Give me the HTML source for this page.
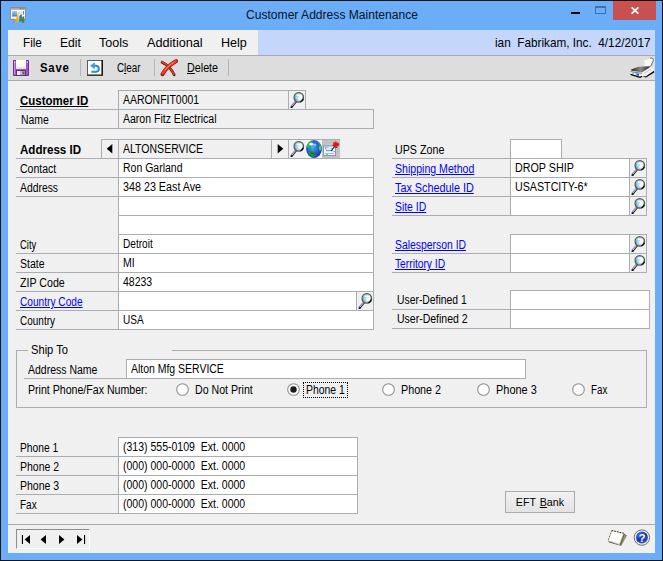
<!DOCTYPE html>
<html lang="en"><head><meta charset="utf-8"><title>Customer Address Maintenance</title>
<style>
html,body{margin:0;padding:0}
body{width:663px;height:561px;overflow:hidden;background:#6BADF6;position:relative;font-family:"Liberation Sans",sans-serif}
#w{position:absolute;left:0;top:0;width:663px;height:561px;box-sizing:border-box;border:1px solid #141414;overflow:hidden}
#w>*{position:absolute}
#c{position:absolute;left:-1px;top:-1px;width:663px;height:561px}
#c>*{position:absolute}
span{white-space:nowrap;transform-origin:0 50%;color:#000}
.t,.lk,.b,.tb{font-size:12px;line-height:16px;transform:scaleX(.875)}
.b,.tb{font-weight:bold;transform:scaleX(.97)}
.lk{color:#00f;text-decoration:underline}
.title{font-size:12.500px;line-height:18px;color:#08122c;transform:scaleX(.967)}
.menu{font-size:13px;line-height:16px;transform:scaleX(.965)}
.btn{box-sizing:border-box;border:1px solid #ACACAC;background:linear-gradient(#F2F2F2,#E3E3E3);text-align:center}
.btn span{position:static;display:inline-block;font-size:11.500px;line-height:20px;transform-origin:50% 50%;transform:scaleX(.93);word-spacing:1px}
</style></head>
<body>
<div id="w"><div id="c">
<!-- title bar -->
<span class="title" style="left:246px;top:6px">Customer Address Maintenance</span>
<div style="left:571px;top:12px;width:9px;height:2px;background:#000;"></div>
<div style="left:595px;top:6px;width:11px;height:8px;background:transparent;border:1px solid #3F6FAE;border-top-width:2px;box-sizing:border-box"></div>
<div style="left:613px;top:1px;width:43px;height:19px;background:#C75050;"></div>
<svg style="left:630px;top:6px" width="10" height="9" viewBox="0 0 10 9"><path d="M1.600 1.400l6.800 6.200M8.400 1.400l-6.800 6.200" stroke="#fff" stroke-width="1.700"/></svg>
<svg style="left:10px;top:7px" width="17" height="17" viewBox="0 0 17 17"><defs><linearGradient id="ab" x1="0" y1="0" x2="0" y2="1"><stop offset="0" stop-color="#a6cdf0"/><stop offset="1" stop-color="#3b7cc9"/></linearGradient><linearGradient id="ao" x1="0" y1="1" x2=".8" y2="0"><stop offset="0" stop-color="#e23a1c"/><stop offset=".3" stop-color="#f59a14"/><stop offset=".8" stop-color="#fcc816"/></linearGradient></defs><rect x=".5" y=".5" width="15" height="12" fill="#fdfdfd" stroke="#8e8e8e"/><rect x="1" y="1" width="14" height="1.800" fill="#a9a9a9"/><rect x="9.800" y="1.300" width="1" height="1" fill="#666"/><rect x="11.600" y="1.300" width="1" height="1" fill="#666"/><rect x="13.400" y="1.300" width="1" height="1" fill="#666"/><rect x="2.100" y="4" width="4.900" height="5.600" fill="url(#ab)"/><rect x="13" y="4" width="1.100" height="3.600" fill="#4a8ad8"/><rect x="9.200" y="4.800" width="3" height=".8" fill="#c4c4c4"/><rect x="9.200" y="6.300" width="2" height=".8" fill="#c4c4c4"/><rect x="2.500" y="10.800" width="2" height="1" fill="#c4c4c4"/><path d="M2.800 15.400Q6.600 12.600 8 5.200L8.800 4.800V14.800Q5.800 14.300 2.800 15.400z" fill="url(#ao)"/><path d="M9.300 14.600V9.300Q10.400 7.200 11.900 7V14.600z" fill="#2f74b4"/><path d="M12.100 15.400V10.200Q13 9.100 14.300 9.200V16z" fill="#3d8c1f"/></svg>
<!-- menu bar -->
<div style="left:8px;top:30px;width:250px;height:25px;background:#F0F0F0;"></div>
<div style="left:258px;top:30px;width:397px;height:25px;background:#C4D7FB;"></div>
<span class="menu" style="left:22.5px;top:35px;transform:scaleX(0.9)">File</span>
<span class="menu" style="left:60px;top:35px;transform:scaleX(0.93)">Edit</span>
<span class="menu" style="left:99px;top:35px;transform:scaleX(0.965)">Tools</span>
<span class="menu" style="left:147px;top:35px;transform:scaleX(0.975)">Additional</span>
<span class="menu" style="left:221px;top:35px;transform:scaleX(0.965)">Help</span>
<span class="menu" style="left:495px;top:35px;transform:scaleX(.905)">ian&nbsp; Fabrikam, Inc.&nbsp; 4/12/2017</span>
<!-- toolbar -->
<div style="left:8px;top:55px;width:647px;height:26px;background:#DCDDDC;"></div>
<div style="left:8px;top:55px;width:647px;height:1px;background:#ABABAB;"></div>
<div style="left:8px;top:80px;width:647px;height:1px;background:#ABABAB;"></div>
<svg style="left:13px;top:60px" width="16" height="16" viewBox="0 0 16 16"><path d="M.5.500h15v15H.5z" fill="#a557c8" stroke="#6e3196"/><path d="M1.500 1.500v13" stroke="#c78fe0"/><rect x="3" y="0" width="10" height="8.600" fill="#fff"/><rect x="3" y="6.600" width="10" height="2" fill="#ececec"/><rect x="3.500" y="10.500" width="9" height="5" fill="#b9b9bd" stroke="#5f2a86"/><rect x="4" y="11" width="3" height="4" fill="#f3f3f3"/><rect x="9.500" y="11.500" width="2" height="3" fill="#5a5a5e"/><rect x="1" y="1.500" width="1.200" height="1.200" fill="#f0e2f8"/><rect x="13.800" y="1.500" width="1.200" height="1.200" fill="#f0e2f8"/></svg>
<span class="tb" style="left:40.0px;top:60px;transform:scaleX(0.946);letter-spacing:.8px">Save</span>
<div style="left:80px;top:59px;width:1px;height:17px;background:#B5B5B5;"></div>
<svg style="left:87px;top:60px" width="16" height="16" viewBox="0 0 16 16"><rect x=".5" y=".5" width="14.500" height="14.500" fill="#fff" stroke="#5c5c5c"/><path d="M15.300 0v16" stroke="#111" stroke-width="1.300"/><path d="M0 15.300h16" stroke="#3a3a22" stroke-width="1.300"/><path d="M5.500 5.800h3.300a3 3 0 010 6H4.500" stroke="#2d86d8" stroke-width="2" fill="none"/><path d="M7.800 2.200L3 5.800l4.800 3.400z" fill="#3fa0dc"/><path d="M4.500 12h4" stroke="#1fb0b0" stroke-width="1"/></svg>
<span class="t" style="left:117.0px;top:60px;transform:scaleX(0.8185);">C<u>l</u>ear</span>
<div style="left:154px;top:59px;width:1px;height:17px;background:#B5B5B5;"></div>
<svg style="left:160px;top:59px" width="18" height="18" viewBox="0 0 18 18"><path d="M2 3.200C7 5.500 11.500 10 14.200 15.800" stroke="#3a0a06" stroke-width="2.600" stroke-linecap="round" fill="none"/><path d="M2 2.800C7 5 11.200 9.500 13.800 15" stroke="#d83a22" stroke-width="2" stroke-linecap="round" fill="none"/><path d="M16 2.200C10.500 5 5.500 9.500 2.600 15.200" stroke="#a01a10" stroke-width="4" stroke-linecap="round" fill="none"/><path d="M15.600 2.400C10.500 5 5.800 9.200 3 14.200" stroke="#e8432a" stroke-width="2.600" stroke-linecap="round" fill="none"/><path d="M14 3.200C10.500 5.200 7.500 8 5.200 11" stroke="#f58a6c" stroke-width="1" fill="none"/></svg>
<span class="t" style="left:187.0px;top:60px;transform:scaleX(0.8961);"><u>D</u>elete</span>
<div style="left:228px;top:59px;width:1px;height:17px;background:#B5B5B5;"></div>
<svg style="left:629px;top:57px" width="26" height="22" viewBox="0 0 26 22"><defs><linearGradient id="pg" x1="0" y1="0" x2="1" y2="0"><stop offset="0" stop-color="#222"/><stop offset=".5" stop-color="#8a8a8a"/><stop offset="1" stop-color="#2a2a2a"/></linearGradient></defs><path d="M14.200 3.800L21 1.300Q24.600.4 24.300 3.400L21.600 9.600 15 8.800 16 5.600z" fill="#fbfaf1"/><path d="M21 1.300Q24.800.3 24.300 3.400L21.600 9.500" stroke="#5a5a5a" stroke-width=".9" fill="none"/><path d="M14.200 3.800L21 1.300" stroke="#b9d8b0" stroke-width=".6" stroke-dasharray="1 1.500"/><path d="M2 12.600L9.500 9.800 21 9.300 19.500 12 13 15.700 3 14.200z" fill="url(#pg)"/><path d="M13 15.600L19.500 11.200 24.600 9.500 25 14 17 19.400 13 18.900z" fill="#f0f0ec"/><path d="M15 16.500l7-4.600" stroke="#c9b8d8" stroke-width=".7"/><path d="M13.400 19.400L17 20.600 25.200 15.500 25 13.800 17 19.200z" fill="#000"/><path d="M1 14.600L3 13.800 13 15.600V19L11 20 1.500 17.200z" fill="#f5f5f5"/><path d="M1.500 14.600L12.800 16.400" stroke="#555" stroke-width=".8"/><path d="M1.500 17.400L11 20.300 13 19.200" stroke="#000" stroke-width="1.300" fill="none"/><path d="M7.400 16.300l2.600.4v2.200l-2.600-.6z" fill="#1c5fd2"/><path d="M3.300 15.600l1.800.3v1.300l-1.800-.4z" fill="#5ab9ea"/><path d="M5.500 16l1.400.2v1.400l-1.400-.3z" fill="#bfe3c4"/></svg>
<!-- form body -->
<div style="left:8px;top:81px;width:647px;height:443px;background:#F0F0F0;"></div>
<div style="left:8px;top:524px;width:647px;height:1px;background:#ABABAB;"></div>
<div style="left:8px;top:525px;width:647px;height:28px;background:#F0F0F0;"></div>
<div style="left:118px;top:90px;width:188px;height:1px;background:#ABADB3;"></div>
<div style="left:118px;top:90px;width:1px;height:39px;background:#ABADB3;"></div>
<div style="left:288px;top:90px;width:1px;height:20px;background:#ABADB3;"></div>
<div style="left:305px;top:90px;width:1px;height:20px;background:#ABADB3;"></div>
<div style="left:16px;top:109px;width:358px;height:1px;background:#ABADB3;"></div>
<div style="left:16px;top:128px;width:358px;height:1px;background:#ABADB3;"></div>
<div style="left:373px;top:109px;width:1px;height:20px;background:#ABADB3;"></div>
<span class="b" style="left:20.0px;top:93px;transform:scaleX(0.9575);text-decoration:underline">Customer ID</span>
<span class="t" style="left:123.0px;top:92px;transform:scaleX(0.871);">AARONFIT0001</span>
<svg style="left:289px;top:91px" width="16" height="18" viewBox="0 0 16 18"><line x1="7.400" y1="10.400" x2="2.600" y2="16.200" stroke="#1a1a1a" stroke-width="1.500" stroke-linecap="round"/><line x1="6.600" y1="9.800" x2="2" y2="15.300" stroke="#6f78c4" stroke-width="1.100"/><line x1="6.900" y1="10.400" x2="2.800" y2="15.300" stroke="#f2f2f2" stroke-width=".7"/><rect x="1.600" y="15.400" width="1.800" height="1.600" fill="#111"/><circle cx="9.800" cy="6.400" r="4.700" fill="#a9d3f7" stroke="#5a563e" stroke-width="1.300"/><path d="M11.500 10.800A4.700 4.700 0 0014.300 7.800" stroke="#111" stroke-width="1.300" fill="none"/><path d="M8 3.600h4.200l1.200 1.800-1 3.400H9.400l-.7-2.200h1.400l.2-1.400H8.200z" fill="#fdfcf1"/><path d="M6.300 4.600q-.8 2.600 1.200 4.400" stroke="#4fbfc8" stroke-width="1" fill="none"/></svg>
<span class="t" style="left:20.5px;top:112px;transform:scaleX(0.8695);">Name</span>
<span class="t" style="left:123.0px;top:111px;transform:scaleX(0.8766);">Aaron Fitz Electrical</span>
<div style="left:101px;top:139px;width:239px;height:1px;background:#ABADB3;"></div>
<div style="left:101px;top:139px;width:1px;height:20px;background:#ABADB3;"></div>
<div style="left:118px;top:139px;width:1px;height:191px;background:#ABADB3;"></div>
<div style="left:271px;top:139px;width:1px;height:20px;background:#ABADB3;"></div>
<div style="left:288px;top:139px;width:1px;height:20px;background:#ABADB3;"></div>
<div style="left:119px;top:159px;width:254px;height:170px;background:#fff;"></div>
<div style="left:306px;top:140px;width:16px;height:18px;background:#F6F6F6;"></div>
<div style="left:322px;top:140px;width:18px;height:18px;background:#C2C2C2;"></div>
<div style="left:16px;top:158px;width:358px;height:1px;background:#ABADB3;"></div>
<div style="left:16px;top:177px;width:358px;height:1px;background:#ABADB3;"></div>
<div style="left:16px;top:196px;width:358px;height:1px;background:#ABADB3;"></div>
<div style="left:16px;top:253px;width:358px;height:1px;background:#ABADB3;"></div>
<div style="left:16px;top:272px;width:358px;height:1px;background:#ABADB3;"></div>
<div style="left:16px;top:291px;width:358px;height:1px;background:#ABADB3;"></div>
<div style="left:16px;top:310px;width:358px;height:1px;background:#ABADB3;"></div>
<div style="left:16px;top:329px;width:358px;height:1px;background:#ABADB3;"></div>
<div style="left:118px;top:215px;width:256px;height:1px;background:#ABADB3;"></div>
<div style="left:118px;top:234px;width:256px;height:1px;background:#ABADB3;"></div>
<div style="left:373px;top:158px;width:1px;height:172px;background:#ABADB3;"></div>
<div style="left:356px;top:291px;width:1px;height:20px;background:#ABADB3;"></div>
<div style="left:357px;top:292px;width:16px;height:18px;background:#F0F0F0;"></div>
<span class="b" style="left:20.0px;top:142px;transform:scaleX(0.9642);">Address ID</span>
<svg style="left:106px;top:144px" width="7" height="10" viewBox="0 0 7 10"><path d="M6.300 0v9.600L.7 4.800z" fill="#000"/></svg>
<svg style="left:277px;top:144px" width="7" height="10" viewBox="0 0 7 10"><path d="M.7 0v9.600l5.600-4.800z" fill="#000"/></svg>
<span class="t" style="left:123.0px;top:141px;transform:scaleX(0.8769);">ALTONSERVICE</span>
<svg style="left:289px;top:140px" width="16" height="18" viewBox="0 0 16 18"><line x1="7.400" y1="10.400" x2="2.600" y2="16.200" stroke="#1a1a1a" stroke-width="1.500" stroke-linecap="round"/><line x1="6.600" y1="9.800" x2="2" y2="15.300" stroke="#6f78c4" stroke-width="1.100"/><line x1="6.900" y1="10.400" x2="2.800" y2="15.300" stroke="#f2f2f2" stroke-width=".7"/><rect x="1.600" y="15.400" width="1.800" height="1.600" fill="#111"/><circle cx="9.800" cy="6.400" r="4.700" fill="#a9d3f7" stroke="#5a563e" stroke-width="1.300"/><path d="M11.500 10.800A4.700 4.700 0 0014.300 7.800" stroke="#111" stroke-width="1.300" fill="none"/><path d="M8 3.600h4.200l1.200 1.800-1 3.400H9.400l-.7-2.200h1.400l.2-1.400H8.200z" fill="#fdfcf1"/><path d="M6.300 4.600q-.8 2.600 1.200 4.400" stroke="#4fbfc8" stroke-width="1" fill="none"/></svg>
<svg style="left:306px;top:140px" width="16" height="18" viewBox="0 0 16 18"><defs><radialGradient id="gl" cx=".42" cy=".4" r=".6"><stop offset="0" stop-color="#46b6dc"/><stop offset=".45" stop-color="#2a78d2"/><stop offset="1" stop-color="#1a2fc4"/></radialGradient></defs><ellipse cx="8" cy="9" rx="7.900" ry="8.900" fill="url(#gl)"/><path d="M.6 6.500Q1 3 4.500 1.200L6 2 3.500 4.500 2.800 8z" fill="#2fc230"/><ellipse cx="14.200" cy="8" rx="1.300" ry="3" fill="#52cc3a"/><path d="M12 2.200l2.500 1.800-1.500.8z" fill="#3bbf3a"/><path d="M2.500 12.500q2.500-2 6 .5l2 2.500-3.500 1.500q-3.500-1-4.500-4.500z" fill="#1c9a2c"/><path d="M4.500 13.500q2-.8 4 1" stroke="#0c6a1c" stroke-width="1.200" fill="none"/><ellipse cx="5.200" cy="4.200" rx="2" ry="1.400" fill="#fff" opacity=".92"/><ellipse cx="8.600" cy="4.800" rx="1.600" ry="1.100" fill="#a9cdf8" opacity=".85"/></svg>
<svg style="left:322px;top:140px" width="18" height="18" viewBox="0 0 18 18"><rect x="1.500" y="6" width="12" height="9.500" fill="#eef3fa" stroke="#7b9cc8"/><path d="M2.500 7.500h4M8 8.500h4M3 13.500h9" stroke="#9fc0ea" stroke-width="1"/><path d="M4 10.500h6.500" stroke="#4aa3e8" stroke-width="1.200"/><rect x="3" y="8" width="1.200" height="1.200" fill="#e0603a"/><rect x="11.500" y="11" width="1.200" height="1.200" fill="#e0603a"/><rect x="4" y="14" width="2" height="1" fill="#9ac26a"/><path d="M12.500 6.500L9.300 11" stroke="#2a2a2a" stroke-width="1.200"/><path d="M10.800 2.800l2.800-1.600 3.800 2.600-1.200 2.600-1.400-.4-.8 2-4-2.400 1.600-1.400z" fill="#d8161e"/><path d="M11.500 3l2.200-1.200 2 1.300" stroke="#f46a6a" stroke-width=".9" fill="none"/><path d="M13.500 8l2-1.200" stroke="#7a0a10" stroke-width="1"/></svg>
<span class="t" style="left:20.0px;top:161px;transform:scaleX(0.8752);">Contact</span>
<span class="t" style="left:123.0px;top:160px;transform:scaleX(0.8751);">Ron Garland</span>
<span class="t" style="left:20.0px;top:180px;transform:scaleX(0.8632);">Address</span>
<span class="t" style="left:123.0px;top:179px;transform:scaleX(0.8958);">348 23 East Ave</span>
<span class="t" style="left:20.0px;top:237px;transform:scaleX(0.788);">City</span>
<span class="t" style="left:123.0px;top:236px;transform:scaleX(0.8397);">Detroit</span>
<span class="t" style="left:20.0px;top:256px;transform:scaleX(0.8753);">State</span>
<span class="t" style="left:123.0px;top:255px;transform:scaleX(0.875);">MI</span>
<span class="t" style="left:20.0px;top:275px;transform:scaleX(0.8857);">ZIP Code</span>
<span class="t" style="left:123.0px;top:274px;transform:scaleX(0.8753);">48233</span>
<span class="t" style="left:20.0px;top:313px;transform:scaleX(0.8324);">Country</span>
<span class="t" style="left:123.0px;top:312px;transform:scaleX(0.8392);">USA</span>
<span class="lk" style="left:20.0px;top:294px;transform:scaleX(0.846);">Country Code</span>
<svg style="left:357px;top:292px" width="16" height="18" viewBox="0 0 16 18"><line x1="7.400" y1="10.400" x2="2.600" y2="16.200" stroke="#1a1a1a" stroke-width="1.500" stroke-linecap="round"/><line x1="6.600" y1="9.800" x2="2" y2="15.300" stroke="#6f78c4" stroke-width="1.100"/><line x1="6.900" y1="10.400" x2="2.800" y2="15.300" stroke="#f2f2f2" stroke-width=".7"/><rect x="1.600" y="15.400" width="1.800" height="1.600" fill="#111"/><circle cx="9.800" cy="6.400" r="4.700" fill="#a9d3f7" stroke="#5a563e" stroke-width="1.300"/><path d="M11.500 10.800A4.700 4.700 0 0014.300 7.800" stroke="#111" stroke-width="1.300" fill="none"/><path d="M8 3.600h4.200l1.200 1.800-1 3.400H9.400l-.7-2.200h1.400l.2-1.400H8.200z" fill="#fdfcf1"/><path d="M6.300 4.600q-.8 2.600 1.200 4.400" stroke="#4fbfc8" stroke-width="1" fill="none"/></svg>
<div style="left:510px;top:139px;width:52px;height:1px;background:#ABADB3;"></div>
<div style="left:510px;top:139px;width:1px;height:77px;background:#ABADB3;"></div>
<div style="left:561px;top:139px;width:1px;height:20px;background:#ABADB3;"></div>
<div style="left:511px;top:140px;width:50px;height:18px;background:#fff;"></div>
<div style="left:511px;top:159px;width:118px;height:56px;background:#fff;"></div>
<div style="left:392px;top:158px;width:255px;height:1px;background:#ABADB3;"></div>
<div style="left:392px;top:177px;width:255px;height:1px;background:#ABADB3;"></div>
<div style="left:392px;top:196px;width:255px;height:1px;background:#ABADB3;"></div>
<div style="left:392px;top:215px;width:255px;height:1px;background:#ABADB3;"></div>
<div style="left:629px;top:158px;width:1px;height:58px;background:#ABADB3;"></div>
<div style="left:646px;top:158px;width:1px;height:58px;background:#ABADB3;"></div>
<span class="t" style="left:395.0px;top:142px;transform:scaleX(0.8915);">UPS Zone</span>
<span class="lk" style="left:395.0px;top:161px;transform:scaleX(0.881);">Shipping Method</span>
<span class="t" style="left:515.0px;top:160px;transform:scaleX(0.8944);">DROP SHIP</span>
<svg style="left:630px;top:159px" width="16" height="18" viewBox="0 0 16 18"><line x1="7.400" y1="10.400" x2="2.600" y2="16.200" stroke="#1a1a1a" stroke-width="1.500" stroke-linecap="round"/><line x1="6.600" y1="9.800" x2="2" y2="15.300" stroke="#6f78c4" stroke-width="1.100"/><line x1="6.900" y1="10.400" x2="2.800" y2="15.300" stroke="#f2f2f2" stroke-width=".7"/><rect x="1.600" y="15.400" width="1.800" height="1.600" fill="#111"/><circle cx="9.800" cy="6.400" r="4.700" fill="#a9d3f7" stroke="#5a563e" stroke-width="1.300"/><path d="M11.500 10.800A4.700 4.700 0 0014.300 7.800" stroke="#111" stroke-width="1.300" fill="none"/><path d="M8 3.600h4.200l1.200 1.800-1 3.400H9.400l-.7-2.200h1.400l.2-1.400H8.200z" fill="#fdfcf1"/><path d="M6.300 4.600q-.8 2.600 1.200 4.400" stroke="#4fbfc8" stroke-width="1" fill="none"/></svg>
<span class="lk" style="left:395.0px;top:180px;transform:scaleX(0.9016);">Tax Schedule ID</span>
<span class="t" style="left:515.0px;top:179px;transform:scaleX(0.8907);">USASTCITY-6*</span>
<svg style="left:630px;top:178px" width="16" height="18" viewBox="0 0 16 18"><line x1="7.400" y1="10.400" x2="2.600" y2="16.200" stroke="#1a1a1a" stroke-width="1.500" stroke-linecap="round"/><line x1="6.600" y1="9.800" x2="2" y2="15.300" stroke="#6f78c4" stroke-width="1.100"/><line x1="6.900" y1="10.400" x2="2.800" y2="15.300" stroke="#f2f2f2" stroke-width=".7"/><rect x="1.600" y="15.400" width="1.800" height="1.600" fill="#111"/><circle cx="9.800" cy="6.400" r="4.700" fill="#a9d3f7" stroke="#5a563e" stroke-width="1.300"/><path d="M11.500 10.800A4.700 4.700 0 0014.300 7.800" stroke="#111" stroke-width="1.300" fill="none"/><path d="M8 3.600h4.200l1.200 1.800-1 3.400H9.400l-.7-2.200h1.400l.2-1.400H8.200z" fill="#fdfcf1"/><path d="M6.300 4.600q-.8 2.600 1.200 4.400" stroke="#4fbfc8" stroke-width="1" fill="none"/></svg>
<span class="lk" style="left:395.0px;top:199px;transform:scaleX(0.8653);">Site ID</span>
<svg style="left:630px;top:197px" width="16" height="18" viewBox="0 0 16 18"><line x1="7.400" y1="10.400" x2="2.600" y2="16.200" stroke="#1a1a1a" stroke-width="1.500" stroke-linecap="round"/><line x1="6.600" y1="9.800" x2="2" y2="15.300" stroke="#6f78c4" stroke-width="1.100"/><line x1="6.900" y1="10.400" x2="2.800" y2="15.300" stroke="#f2f2f2" stroke-width=".7"/><rect x="1.600" y="15.400" width="1.800" height="1.600" fill="#111"/><circle cx="9.800" cy="6.400" r="4.700" fill="#a9d3f7" stroke="#5a563e" stroke-width="1.300"/><path d="M11.500 10.800A4.700 4.700 0 0014.300 7.800" stroke="#111" stroke-width="1.300" fill="none"/><path d="M8 3.600h4.200l1.200 1.800-1 3.400H9.400l-.7-2.200h1.400l.2-1.400H8.200z" fill="#fdfcf1"/><path d="M6.300 4.600q-.8 2.600 1.200 4.400" stroke="#4fbfc8" stroke-width="1" fill="none"/></svg>
<div style="left:510px;top:234px;width:137px;height:1px;background:#ABADB3;"></div>
<div style="left:510px;top:234px;width:1px;height:39px;background:#ABADB3;"></div>
<div style="left:629px;top:234px;width:1px;height:39px;background:#ABADB3;"></div>
<div style="left:646px;top:234px;width:1px;height:39px;background:#ABADB3;"></div>
<div style="left:511px;top:235px;width:118px;height:37px;background:#fff;"></div>
<div style="left:392px;top:253px;width:255px;height:1px;background:#ABADB3;"></div>
<div style="left:392px;top:272px;width:255px;height:1px;background:#ABADB3;"></div>
<span class="lk" style="left:395.0px;top:237px;transform:scaleX(0.8663);">Salesperson ID</span>
<svg style="left:630px;top:235px" width="16" height="18" viewBox="0 0 16 18"><line x1="7.400" y1="10.400" x2="2.600" y2="16.200" stroke="#1a1a1a" stroke-width="1.500" stroke-linecap="round"/><line x1="6.600" y1="9.800" x2="2" y2="15.300" stroke="#6f78c4" stroke-width="1.100"/><line x1="6.900" y1="10.400" x2="2.800" y2="15.300" stroke="#f2f2f2" stroke-width=".7"/><rect x="1.600" y="15.400" width="1.800" height="1.600" fill="#111"/><circle cx="9.800" cy="6.400" r="4.700" fill="#a9d3f7" stroke="#5a563e" stroke-width="1.300"/><path d="M11.500 10.800A4.700 4.700 0 0014.300 7.800" stroke="#111" stroke-width="1.300" fill="none"/><path d="M8 3.600h4.200l1.200 1.800-1 3.400H9.400l-.7-2.200h1.400l.2-1.400H8.200z" fill="#fdfcf1"/><path d="M6.300 4.600q-.8 2.600 1.200 4.400" stroke="#4fbfc8" stroke-width="1" fill="none"/></svg>
<span class="lk" style="left:395.0px;top:256px;transform:scaleX(0.8537);">Territory ID</span>
<svg style="left:630px;top:254px" width="16" height="18" viewBox="0 0 16 18"><line x1="7.400" y1="10.400" x2="2.600" y2="16.200" stroke="#1a1a1a" stroke-width="1.500" stroke-linecap="round"/><line x1="6.600" y1="9.800" x2="2" y2="15.300" stroke="#6f78c4" stroke-width="1.100"/><line x1="6.900" y1="10.400" x2="2.800" y2="15.300" stroke="#f2f2f2" stroke-width=".7"/><rect x="1.600" y="15.400" width="1.800" height="1.600" fill="#111"/><circle cx="9.800" cy="6.400" r="4.700" fill="#a9d3f7" stroke="#5a563e" stroke-width="1.300"/><path d="M11.500 10.800A4.700 4.700 0 0014.300 7.800" stroke="#111" stroke-width="1.300" fill="none"/><path d="M8 3.600h4.200l1.200 1.800-1 3.400H9.400l-.7-2.200h1.400l.2-1.400H8.200z" fill="#fdfcf1"/><path d="M6.300 4.600q-.8 2.600 1.200 4.400" stroke="#4fbfc8" stroke-width="1" fill="none"/></svg>
<div style="left:510px;top:290px;width:140px;height:1px;background:#ABADB3;"></div>
<div style="left:510px;top:290px;width:1px;height:39px;background:#ABADB3;"></div>
<div style="left:649px;top:290px;width:1px;height:39px;background:#ABADB3;"></div>
<div style="left:511px;top:291px;width:138px;height:37px;background:#fff;"></div>
<div style="left:392px;top:309px;width:258px;height:1px;background:#ABADB3;"></div>
<div style="left:392px;top:328px;width:258px;height:1px;background:#ABADB3;"></div>
<span class="t" style="left:397.0px;top:292px;transform:scaleX(0.8639);">User-Defined 1</span>
<span class="t" style="left:397.0px;top:311px;transform:scaleX(0.875);">User-Defined 2</span>
<div style="left:16px;top:350px;width:12px;height:1px;background:#ABADB3;"></div>
<div style="left:172px;top:350px;width:475px;height:1px;background:#ABADB3;"></div>
<div style="left:16px;top:350px;width:1px;height:58px;background:#ABADB3;"></div>
<div style="left:646px;top:350px;width:1px;height:58px;background:#ABADB3;"></div>
<div style="left:16px;top:407px;width:631px;height:1px;background:#ABADB3;"></div>
<span class="t" style="left:31.0px;top:342px;transform:scaleX(0.9292);">Ship To</span>
<div style="left:126px;top:359px;width:400px;height:1px;background:#ABADB3;"></div>
<div style="left:126px;top:359px;width:1px;height:20px;background:#ABADB3;"></div>
<div style="left:525px;top:359px;width:1px;height:20px;background:#ABADB3;"></div>
<div style="left:127px;top:360px;width:398px;height:18px;background:#fff;"></div>
<div style="left:24px;top:378px;width:502px;height:1px;background:#ABADB3;"></div>
<span class="t" style="left:28.0px;top:362px;transform:scaleX(0.875);">Address Name</span>
<span class="t" style="left:131.0px;top:361px;transform:scaleX(0.8716);">Alton Mfg SERVICE</span>
<span class="t" style="left:28.0px;top:382px;transform:scaleX(0.883);">Print Phone/Fax Number:</span>
<svg style="left:176px;top:383px" width="13" height="13" viewBox="0 0 13 13"><circle cx="6.500" cy="6.500" r="5.800" fill="#fff" stroke="#8e8f8f" stroke-width="1.100"/></svg>
<span class="t" style="left:195.0px;top:382px;transform:scaleX(0.8833);">Do Not Print</span>
<svg style="left:287px;top:383px" width="13" height="13" viewBox="0 0 13 13"><circle cx="6.500" cy="6.500" r="5.800" fill="#fff" stroke="#8e8f8f" stroke-width="1.100"/><circle cx="6.500" cy="6.500" r="3.200" fill="#1a1a1a"/></svg>
<div style="left:303px;top:382px;width:45px;height:16px;background:transparent;border:1px dotted #000;box-sizing:border-box"></div>
<span class="t" style="left:306.0px;top:382px;transform:scaleX(0.867);">Phone 1</span>
<svg style="left:382px;top:383px" width="13" height="13" viewBox="0 0 13 13"><circle cx="6.500" cy="6.500" r="5.800" fill="#fff" stroke="#8e8f8f" stroke-width="1.100"/></svg>
<span class="t" style="left:401.0px;top:382px;transform:scaleX(0.8952);">Phone 2</span>
<svg style="left:477px;top:383px" width="13" height="13" viewBox="0 0 13 13"><circle cx="6.500" cy="6.500" r="5.800" fill="#fff" stroke="#8e8f8f" stroke-width="1.100"/></svg>
<span class="t" style="left:496.0px;top:382px;transform:scaleX(0.9114);">Phone 3</span>
<svg style="left:572px;top:383px" width="13" height="13" viewBox="0 0 13 13"><circle cx="6.500" cy="6.500" r="5.800" fill="#fff" stroke="#8e8f8f" stroke-width="1.100"/></svg>
<span class="t" style="left:591.0px;top:382px;transform:scaleX(0.8138);">Fax</span>
<div style="left:118px;top:437px;width:240px;height:1px;background:#ABADB3;"></div>
<div style="left:118px;top:437px;width:1px;height:77px;background:#ABADB3;"></div>
<div style="left:357px;top:437px;width:1px;height:77px;background:#ABADB3;"></div>
<div style="left:119px;top:438px;width:238px;height:75px;background:#fff;"></div>
<div style="left:16px;top:456px;width:342px;height:1px;background:#ABADB3;"></div>
<div style="left:16px;top:475px;width:342px;height:1px;background:#ABADB3;"></div>
<div style="left:16px;top:494px;width:342px;height:1px;background:#ABADB3;"></div>
<div style="left:16px;top:513px;width:342px;height:1px;background:#ABADB3;"></div>
<span class="t" style="left:20.0px;top:440px;transform:scaleX(0.8549);">Phone 1</span>
<span class="t" style="left:123.0px;top:439px;transform:scaleX(0.8763);">(313) 555-0109&nbsp; Ext. 0000</span>
<span class="t" style="left:20.0px;top:459px;transform:scaleX(0.8751);">Phone 2</span>
<span class="t" style="left:123.0px;top:458px;transform:scaleX(0.8763);">(000) 000-0000&nbsp; Ext. 0000</span>
<span class="t" style="left:20.0px;top:478px;transform:scaleX(0.8751);">Phone 3</span>
<span class="t" style="left:123.0px;top:477px;transform:scaleX(0.8763);">(000) 000-0000&nbsp; Ext. 0000</span>
<span class="t" style="left:20.0px;top:497px;transform:scaleX(0.8313);">Fax</span>
<span class="t" style="left:123.0px;top:496px;transform:scaleX(0.8763);">(000) 000-0000&nbsp; Ext. 0000</span>
<div class="btn" style="left:505px;top:491px;width:70px;height:22px"><span>EFT <u>B</u>ank</span></div>
<div style="left:16px;top:529px;width:74px;height:20px;background:#F0F0F0;border:1px solid #fff;border-top-color:#8E8E8E;border-left-color:#8E8E8E;box-sizing:border-box"></div>
<svg style="left:21px;top:535px" width="66" height="9" viewBox="0 0 66 9"><g fill="#000"><rect x=".9" y="0" width="1.100" height="9"/><path d="M9 0v9L3.700 4.500z"/><path d="M25 0v9l-5.400-4.500z"/><path d="M38 0v9l5.400-4.500z"/><path d="M56 0v9l5.400-4.500z"/><rect x="63" y="0" width="1.100" height="9"/></g></svg>
<svg style="left:607px;top:528px" width="22" height="19" viewBox="0 0 22 19"><path d="M1.100 12.900l11.400 3.900 1.300 1-11.600-3.400z" fill="#5c5a36"/><path d="M16.700 5.300l3.200 2.200-6 10.500-1.400-1.600z" fill="#6b6948"/><path d="M17.500 6.800l1.600 1.200-5 8.600z" fill="#9a9878"/><path d="M4.800 2.500l11.900 2.800-4.200 11.100L1.100 12.700z" fill="#fffffb" stroke="#8a8868" stroke-width=".5"/><path d="M4.800 2.500l11.900 2.800" stroke="#3a3a2a" stroke-width="1.100" stroke-dasharray="1.400 1.300"/><path d="M4.800 2.500L1.100 12.700" stroke="#4a5a3a" stroke-width=".8" stroke-dasharray="1.200 1.600"/></svg>
<svg style="left:633px;top:529px" width="18" height="18" viewBox="0 0 18 18"><defs><linearGradient id="hg" x1="0" y1="0" x2="1" y2="1"><stop offset="0" stop-color="#4a78e0"/><stop offset=".5" stop-color="#1c3fb4"/><stop offset="1" stop-color="#2a5ad0"/></linearGradient></defs><circle cx="8.900" cy="8.600" r="7.700" fill="#f6f6f6" stroke="#6c6c6c" stroke-width="1"/><circle cx="8.900" cy="8.600" r="6" fill="url(#hg)"/><path d="M4 11.500q5-1 9.500-6" stroke="#163291" stroke-width="2" fill="none" opacity=".7"/><text x="8.900" y="12.900" text-anchor="middle" font-family="Liberation Sans,sans-serif" font-weight="bold" font-size="11.500" fill="#fff">?</text></svg>
</div></div>
</body></html>
